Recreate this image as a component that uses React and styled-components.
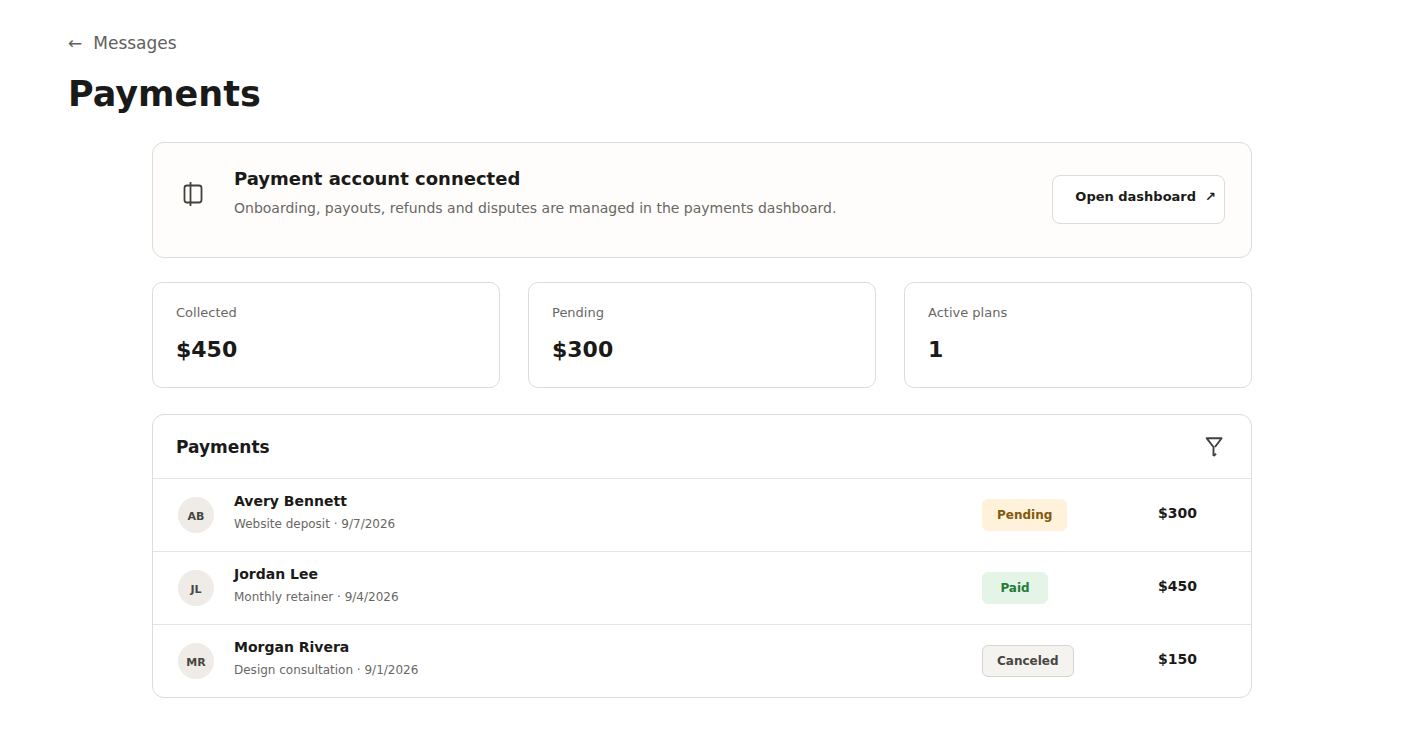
import styled, { createGlobalStyle } from "styled-components";

const stats = [
  { label: "Collected", value: "$450" },
  { label: "Pending", value: "$300" },
  { label: "Active plans", value: "1" },
];

const payments = [
  {
    initials: "AB",
    name: "Avery Bennett",
    detail: "Website deposit · 9/7/2026",
    status: "Pending",
    amount: "$300",
  },
  {
    initials: "JL",
    name: "Jordan Lee",
    detail: "Monthly retainer · 9/4/2026",
    status: "Paid",
    amount: "$450",
  },
  {
    initials: "MR",
    name: "Morgan Rivera",
    detail: "Design consultation · 9/1/2026",
    status: "Canceled",
    amount: "$150",
  },
];

const badgeColors = {
  Pending: { bg: "#fff1da", text: "#80590f", border: "#fff1da" },
  Paid: { bg: "#e4f5e7", text: "#257a3b", border: "#e4f5e7" },
  Canceled: { bg: "#f5f3f0", text: "#484642", border: "#d6d4d1" },
};

const AccountIcon = () => (
  <svg width="24" height="28" viewBox="0 0 24 28" fill="none" aria-hidden="true">
    <rect x="3.5" y="5.5" width="17" height="17" rx="2.5" stroke="#43413e" strokeWidth="1.8" />
    <path d="M9.5 2v24" stroke="#43413e" strokeWidth="1.8" />
  </svg>
);

const FilterIcon = () => (
  <svg width="20" height="24" viewBox="0 0 20 24" fill="none" aria-hidden="true">
    <path
      d="M9.5 21V12L2.6 3.2h15L11 12M9.5 21l2.6-2.2"
      stroke="#43413e"
      strokeWidth="1.9"
      strokeLinejoin="round"
    />
  </svg>
);

export default function App() {
  return (
    <>
      <GlobalStyle />
      <Page>
        <BackLink href="#messages">
          <span aria-hidden="true">←</span>
          Messages
        </BackLink>
        <Title>Payments</Title>

        <Content>
          <AccountCard>
            <IconSlot>
              <AccountIcon />
            </IconSlot>
            <AccountText>
              <AccountTitle>Payment account connected</AccountTitle>
              <AccountNote>
                Onboarding, payouts, refunds and disputes are managed in the
                payments dashboard.
              </AccountNote>
            </AccountText>
            <DashboardButton type="button">
              Open dashboard
              <span aria-hidden="true">↗</span>
            </DashboardButton>
          </AccountCard>

          <Stats>
            {stats.map((stat) => (
              <StatCard key={stat.label}>
                <StatLabel>{stat.label}</StatLabel>
                <StatValue>{stat.value}</StatValue>
              </StatCard>
            ))}
          </Stats>

          <Panel>
            <PanelHeader>
              <PanelTitle>Payments</PanelTitle>
              <FilterButton type="button" aria-label="Filter payments">
                <FilterIcon />
              </FilterButton>
            </PanelHeader>
            <PaymentList>
              {payments.map((payment) => (
                <PaymentRow key={payment.initials}>
                  <Avatar>{payment.initials}</Avatar>
                  <Payer>
                    <Name>{payment.name}</Name>
                    <Detail>{payment.detail}</Detail>
                  </Payer>
                  <Badge $status={payment.status}>{payment.status}</Badge>
                  <Amount>{payment.amount}</Amount>
                </PaymentRow>
              ))}
            </PaymentList>
          </Panel>
        </Content>
      </Page>
    </>
  );
}

const GlobalStyle = createGlobalStyle`
  * {
    box-sizing: border-box;
  }
  body {
    margin: 0;
    background: #fff;
    color: #1a1a18;
    font-family: "DejaVu Sans", sans-serif;
  }
  h1, h2, p, ul, dl, dd {
    margin: 0;
    padding: 0;
  }
  button {
    font-family: inherit;
    color: inherit;
    cursor: pointer;
  }
`;

const Page = styled.main`
  padding: 31px 66px 36px 68px;
`;

const BackLink = styled.a`
  display: inline-flex;
  gap: 11px;
  font-size: 17px;
  line-height: 24px;
  color: #62605c;
  text-decoration: none;
  vertical-align: top;
`;

const Title = styled.h1`
  margin-top: 17px;
  font-size: 35px;
  line-height: 44px;
  font-weight: 700;
`;

const Content = styled.div`
  max-width: 1100px;
  margin: 26px auto 0;
`;

const AccountCard = styled.section`
  display: flex;
  align-items: flex-start;
  padding: 24px 26px 33px 28px;
  border: 1px solid #dddcda;
  border-radius: 12px;
  background: #fefdfb;
`;

const IconSlot = styled.div`
  display: flex;
  width: 53px;
  padding-top: 13px;
`;

const AccountText = styled.div`
  flex: 1;
`;

const AccountTitle = styled.h2`
  font-size: 18px;
  line-height: 24px;
`;

const AccountNote = styled.p`
  margin-top: 6px;
  font-size: 14px;
  line-height: 22px;
  color: #696763;
`;

const DashboardButton = styled.button`
  display: flex;
  gap: 9px;
  margin-top: 8px;
  padding: 11px 8px 16px 22px;
  border: 1px solid #dddcda;
  border-radius: 8px;
  background: #fff;
  font-size: 13px;
  line-height: 20px;
  font-weight: 700;
  white-space: nowrap;
`;

const Stats = styled.dl`
  display: grid;
  grid-template-columns: repeat(3, 1fr);
  gap: 28px;
  margin-top: 24px;
`;

const StatCard = styled.div`
  padding: 20px 23px 23px;
  border: 1px solid #dddcda;
  border-radius: 10px;
`;

const StatLabel = styled.dt`
  font-size: 13px;
  line-height: 20px;
  color: #696763;
`;

const StatValue = styled.dd`
  margin-top: 13px;
  font-size: 22px;
  line-height: 28px;
  font-weight: 700;
`;

const Panel = styled.section`
  margin-top: 26px;
  border: 1px solid #dddcda;
  border-radius: 12px;
`;

const PanelHeader = styled.header`
  display: flex;
  justify-content: space-between;
  padding: 20px 27px 19px 23px;
`;

const PanelTitle = styled.h2`
  font-size: 17px;
  line-height: 24px;
`;

const FilterButton = styled.button`
  display: flex;
  padding: 0;
  border: 0;
  background: none;
`;

const PaymentList = styled.ul`
  list-style: none;
`;

const PaymentRow = styled.li`
  display: grid;
  grid-template-columns: 36px 1fr 176px auto;
  align-items: start;
  padding: 12px 54px 18px 25px;
  border-top: 1px solid #e5e4e1;
`;

const Avatar = styled.span`
  display: flex;
  align-items: center;
  justify-content: center;
  height: 36px;
  margin-top: 6px;
  padding-top: 2px;
  border-radius: 50%;
  background: #efece7;
  color: #484642;
  font-size: 11px;
  font-weight: 700;
`;

const Payer = styled.div`
  padding-left: 20px;
`;

const Name = styled.p`
  font-size: 14px;
  line-height: 20px;
  font-weight: 700;
`;

const Detail = styled.p`
  margin-top: 5px;
  font-size: 12px;
  line-height: 16px;
  color: #696763;
`;

const Badge = styled.span`
  justify-self: start;
  min-width: 66px;
  margin-top: 8px;
  padding: 6px 14px;
  border: 1px solid ${({ $status }) => badgeColors[$status].border};
  border-radius: 6px;
  background: ${({ $status }) => badgeColors[$status].bg};
  color: ${({ $status }) => badgeColors[$status].text};
  font-size: 12px;
  line-height: 18px;
  font-weight: 700;
  text-align: center;
`;

const Amount = styled.strong`
  margin-top: 12px;
  font-size: 14px;
  line-height: 20px;
`;
